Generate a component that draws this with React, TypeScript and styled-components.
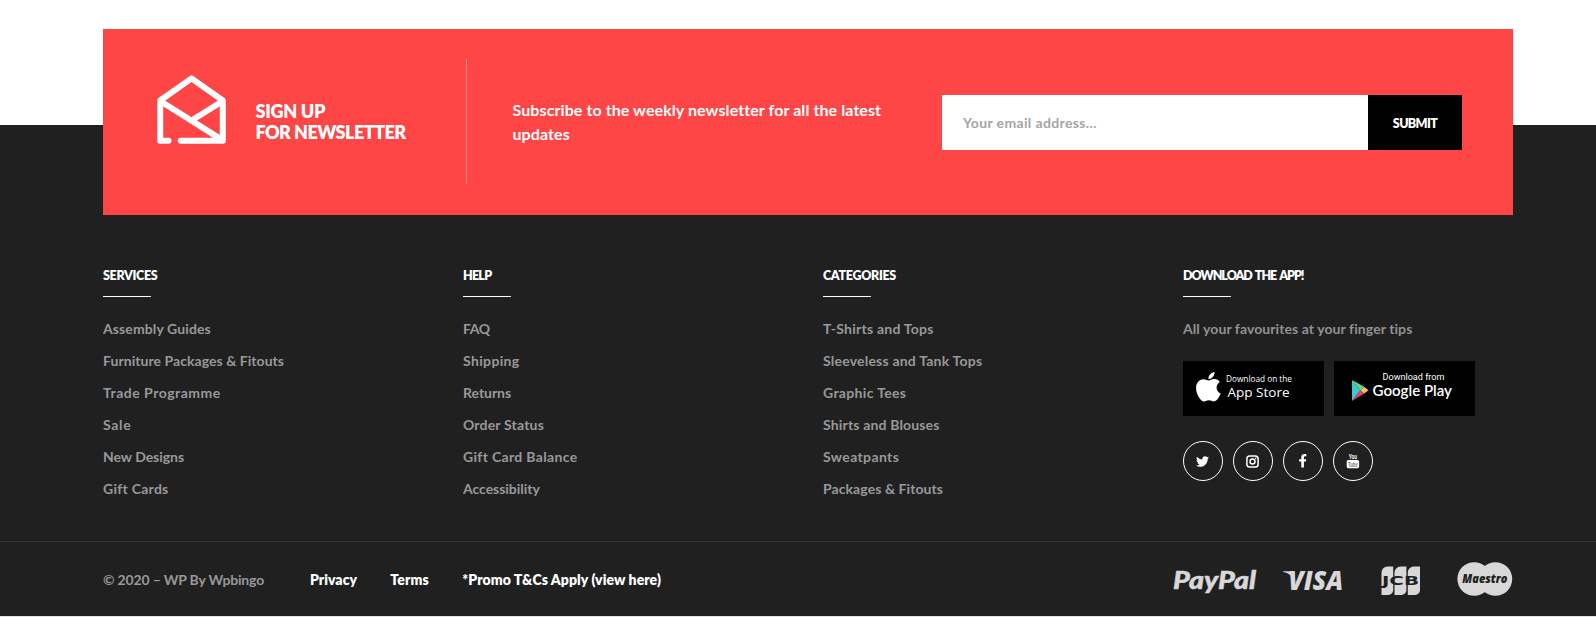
import React from 'react';
import styled, { createGlobalStyle } from 'styled-components';
import { FaTwitter, FaFacebookF, FaApple } from 'react-icons/fa';

const GlobalStyle = createGlobalStyle`
  * { box-sizing: border-box; }
  body { margin: 0; background: #fff; font-family: Lato, 'Open Sans', sans-serif; }
  h2, h3, p, ul { margin: 0; padding: 0; }
  a { color: inherit; text-decoration: none; }
`;

const Page = styled.div`
  width: 1596px;
  height: 617px;
  overflow: hidden;
  background: #e4e2e2;
`;

const NewsletterBand = styled.section`
  padding: 29px 83px 0 103px;
  background: linear-gradient(#fff 125px, #202020 125px);
`;

const Newsletter = styled.div`
  display: flex;
  height: 186px;
  padding: 30px 51px 31px 54px;
  background: #ff4647;
  color: #fff;
`;

const SignUp = styled.div`
  display: flex;
  width: 310px;
  border-right: 1px solid #ff8283;
`;

const Envelope = styled.svg`
  width: 69px;
  height: 69px;
  margin-top: 16px;
`;

const SignUpTitle = styled.h2`
  margin: 42px 0 0 29.5px;
  font-size: 18px;
  font-weight: 800;
  line-height: 21px;
`;

const Pitch = styled.p`
  width: 475px;
  padding: 39px 40px 0 45.5px;
  font-size: 16px;
  font-weight: 700;
  line-height: 24px;
  letter-spacing: 0.09px;
`;

const Form = styled.form`
  display: flex;
  width: 520px;
  height: 55px;
  margin-top: 36px;
`;

const EmailInput = styled.input`
  flex: 1;
  min-width: 0;
  padding: 0 20px 0 21px;
  border: 0;
  outline: 0;
  background: #fff;
  font: 700 14px Lato, sans-serif;
  letter-spacing: 0.36px;
  &::placeholder { color: #a5a5a5; opacity: 1; }
`;

const SubmitButton = styled.button`
  width: 94px;
  padding: 1px 0 0;
  border: 0;
  background: #000;
  color: #fff;
  font: 800 12.5px Lato, sans-serif;
  letter-spacing: -0.65px;
`;

const Columns = styled.section`
  display: grid;
  grid-template-columns: repeat(4, 360px);
  height: 326px;
  padding: 53px 0 0 103px;
  background: #202020;
`;

const ColumnTitle = styled.h3<{ $tracking: number }>`
  height: 28px;
  font-size: 12.5px;
  font-weight: 800;
  line-height: 16px;
  letter-spacing: ${(p) => p.$tracking}px;
  word-spacing: 1.5px;
  color: #fff;
`;

const Rule = styled.div`
  width: 48px;
  height: 1px;
  margin-bottom: 16px;
  background: #fff;
`;

const LinkList = styled.ul`
  list-style: none;
`;

const LinkItem = styled.li<{ $tracking: number }>`
  font-size: 14px;
  font-weight: 700;
  line-height: 32px;
  letter-spacing: ${(p) => p.$tracking - 0.05}px;
  color: #999;
`;

const AppNote = styled.p`
  font-size: 14px;
  font-weight: 700;
  line-height: 32px;
  letter-spacing: 0.08px;
  color: #929292;
`;

const StoreRow = styled.div`
  display: flex;
  gap: 10px;
  margin-top: 16px;
`;

const StoreBadge = styled.a`
  display: block;
  width: 141px;
  height: 55px;
  background: #000;
  color: #fff;
  svg { display: block; }
`;

const SocialRow = styled.div`
  display: flex;
  gap: 10px;
  margin-top: 25px;
`;

const SocialLink = styled.a`
  display: flex;
  align-items: center;
  justify-content: center;
  width: 40px;
  height: 40px;
  padding-right: 1px;
  border: 1px solid #fff;
  border-radius: 50%;
  color: #fff;
`;

const BottomBar = styled.footer`
  display: flex;
  align-items: center;
  height: 75px;
  padding: 0 83px 0 103px;
  border-top: 1px solid #373737;
  background: #202020;
  font-size: 14px;
  line-height: 20px;
`;

const Copyright = styled.span`
  width: 207px;
  padding-top: 1px;
  font-weight: 700;
  letter-spacing: -0.17px;
  color: #999;
`;

const LegalLinks = styled.nav`
  display: flex;
  flex: 1;
  gap: 33.3px;
  padding-top: 1px;
  font-weight: 800;
  color: #fff;
`;

const LegalLink = styled.a<{ $tracking: number }>`
  letter-spacing: ${(p) => p.$tracking}px;
`;

const Payments = styled.svg`
  width: 340px;
  height: 40px;
  flex: none;
`;

type Entry = { label: string; tracking: number };
type Group = { title: string; tracking: number; links: Entry[] };

const groups: Group[] = [
  {
    title: 'SERVICES',
    tracking: -0.33,
    links: [
      { label: 'Assembly Guides', tracking: 0.16 },
      { label: 'Furniture Packages & Fitouts', tracking: 0.1 },
      { label: 'Trade Programme', tracking: 0.56 },
      { label: 'Sale', tracking: 0.75 },
      { label: 'New Designs', tracking: 0.01 },
      { label: 'Gift Cards', tracking: 0.32 },
    ],
  },
  {
    title: 'HELP',
    tracking: -0.75,
    links: [
      { label: 'FAQ', tracking: -0.35 },
      { label: 'Shipping', tracking: 0.4 },
      { label: 'Returns', tracking: 0.02 },
      { label: 'Order Status', tracking: 0.23 },
      { label: 'Gift Card Balance', tracking: 0.38 },
      { label: 'Accessibility', tracking: 0.01 },
    ],
  },
  {
    title: 'CATEGORIES',
    tracking: -0.33,
    links: [
      { label: 'T-Shirts and Tops', tracking: 0.29 },
      { label: 'Sleeveless and Tank Tops', tracking: 0.26 },
      { label: 'Graphic Tees', tracking: 0.39 },
      { label: 'Shirts and Blouses', tracking: 0.21 },
      { label: 'Sweatpants', tracking: 0.42 },
      { label: 'Packages & Fitouts', tracking: 0.13 },
    ],
  },
];

const legal: Entry[] = [
  { label: 'Privacy', tracking: 0.03 },
  { label: 'Terms', tracking: 0.15 },
  { label: '*Promo T&Cs Apply (view here)', tracking: 0.08 },
];

const TitleLine = styled.span<{ $tracking: number }>`
  display: block;
  white-space: nowrap;
  letter-spacing: ${(p) => p.$tracking}px;
`;

function EnvelopeIcon() {
  return (
    <Envelope viewBox="0 0 69 69" fill="none" stroke="#fff" strokeWidth="6" strokeLinecap="round" strokeLinejoin="round">
      <path d="M11.5 65.7H3.2V25.5L34.5 3.4l31.3 22.1v40.2H23.7" />
      <path d="M4 26.5l61 38.4M65 26.5L36.5 44.2" strokeLinecap="butt" />
    </Envelope>
  );
}

function AppStoreBadge() {
  return (
    <svg width="141" height="55" viewBox="0 0 141 55" fill="#fff" fontFamily="'Open Sans', sans-serif">
      <FaApple x="8.6" y="9" size={33.5} color="#fff" />
      <text x="43" y="21" fontSize="8.4" textLength="66" lengthAdjust="spacingAndGlyphs">Download on the</text>
      <text x="44.5" y="36" fontSize="13.4" textLength="62" lengthAdjust="spacingAndGlyphs">App Store</text>
    </svg>
  );
}

function GooglePlayBadge() {
  return (
    <svg width="141" height="55" viewBox="0 0 141 55" fill="#fff">
      <path d="M18 19l8.4 10.5L18 40z" fill="#45c3cf" />
      <path d="M18 19l12.2 6.8-3.8 3.8z" fill="#63d68e" />
      <path d="M30.2 25.8l4.3 3.5-4.3 3.2-3.8-3z" fill="#f6c358" />
      <path d="M18 40l8.4-10.5 3.8 3z" fill="#dd4467" />
      <text x="48.5" y="19.2" fontFamily="Roboto, sans-serif" fontSize="8.6" textLength="62" lengthAdjust="spacingAndGlyphs">Download from</text>
      <text x="38.5" y="35" fontFamily="Lato, sans-serif" fontWeight="600" fontSize="15" textLength="79.5" lengthAdjust="spacingAndGlyphs">Google Play</text>
    </svg>
  );
}

function InstagramIcon() {
  return (
    <svg width="13" height="13" viewBox="0 0 13 13" fill="none" stroke="#fff" strokeWidth="1.5">
      <rect x="0.9" y="0.9" width="11.2" height="11.2" rx="2.8" />
      <circle cx="6.5" cy="6.5" r="2.5" />
      <circle cx="9.8" cy="3.2" r="0.8" fill="#fff" stroke="none" />
    </svg>
  );
}

function YouTubeIcon() {
  return (
    <svg width="20" height="20" viewBox="0 0 20 20" fontFamily="'Liberation Sans', sans-serif" fontWeight="700">
      <text x="5.7" y="8.3" fontSize="7" fill="#fff" textLength="8.4" lengthAdjust="spacingAndGlyphs">You</text>
      <rect x="3.7" y="9" width="12.4" height="8.2" rx="1.6" fill="#fff" />
      <text x="5" y="15.6" fontSize="6.4" fill="#777" textLength="9.8" lengthAdjust="spacingAndGlyphs">Tube</text>
    </svg>
  );
}

function PaymentLogos() {
  return (
    <Payments viewBox="0 0 340 40" fill="#d8d8d8">
      <text x="0" y="29.5" fontFamily="Lato, sans-serif" fontStyle="italic" fontWeight="900" fontSize="24.5" textLength="83" lengthAdjust="spacingAndGlyphs" stroke="#d8d8d8" strokeWidth="0.5">PayPal</text>
      <path d="M110 12.2h9.5l3.2 11.8c-2.3-6-6-9.8-12.7-11.3z" />
      <text x="115.3" y="31" fontFamily="'Open Sans', sans-serif" fontStyle="italic" fontWeight="800" fontSize="26" textLength="55" lengthAdjust="spacingAndGlyphs">VISA</text>
      <path d="M214.5 7.5h5.7v23.5a5 5 0 0 1-5 5h-6.7v-22.5a6 6 0 0 1 6-6z" />
      <path d="M227.7 7.5h5.7v23.5a5 5 0 0 1-5 5h-6.9v-22.5a6 6 0 0 1 6.2-6z" />
      <path d="M240.7 7.5h6.3v23.5a5 5 0 0 1-5 5h-7.2v-22.5a6 6 0 0 1 5.9-6z" />
      <text x="209" y="26.2" fill="#202020" fontFamily="'DejaVu Sans', sans-serif" fontWeight="700" fontSize="12.5" textLength="37" lengthAdjust="spacingAndGlyphs">JCB</text>
      <circle cx="301.2" cy="20" r="16.8" />
      <circle cx="322.4" cy="20" r="16.8" />
      <text x="289.3" y="24" fill="#202020" fontFamily="'Open Sans', sans-serif" fontStyle="italic" fontWeight="800" fontSize="12.5" textLength="45" lengthAdjust="spacingAndGlyphs">Maestro</text>
    </Payments>
  );
}

export default function App() {
  return (
    <Page>
      <GlobalStyle />
      <NewsletterBand>
        <Newsletter>
          <SignUp>
            <EnvelopeIcon />
            <SignUpTitle>
              <TitleLine $tracking={-0.27}>SIGN UP</TitleLine>
              <TitleLine $tracking={-0.56}>FOR NEWSLETTER</TitleLine>
            </SignUpTitle>
          </SignUp>
          <Pitch>Subscribe to the weekly newsletter for all the latest updates</Pitch>
          <Form>
            <EmailInput type="email" placeholder="Your email address..." />
            <SubmitButton type="button">SUBMIT</SubmitButton>
          </Form>
        </Newsletter>
      </NewsletterBand>

      <Columns>
        {groups.map((group) => (
          <div key={group.title}>
            <ColumnTitle $tracking={group.tracking}>{group.title}</ColumnTitle>
            <Rule />
            <LinkList>
              {group.links.map((link) => (
                <LinkItem key={link.label} $tracking={link.tracking}>
                  <a href="#">{link.label}</a>
                </LinkItem>
              ))}
            </LinkList>
          </div>
        ))}
        <div>
          <ColumnTitle $tracking={-1.03}>DOWNLOAD THE APP!</ColumnTitle>
          <Rule />
          <AppNote>All your favourites at your finger tips</AppNote>
          <StoreRow>
            <StoreBadge href="#"><AppStoreBadge /></StoreBadge>
            <StoreBadge href="#"><GooglePlayBadge /></StoreBadge>
          </StoreRow>
          <SocialRow>
            <SocialLink href="#" aria-label="Twitter"><FaTwitter size={13} /></SocialLink>
            <SocialLink href="#" aria-label="Instagram"><InstagramIcon /></SocialLink>
            <SocialLink href="#" aria-label="Facebook"><FaFacebookF size={13.5} /></SocialLink>
            <SocialLink href="#" aria-label="YouTube"><YouTubeIcon /></SocialLink>
          </SocialRow>
        </div>
      </Columns>

      <BottomBar>
        <Copyright>© 2020 – WP By Wpbingo</Copyright>
        <LegalLinks>
          {legal.map((item) => (
            <LegalLink key={item.label} href="#" $tracking={item.tracking}>{item.label}</LegalLink>
          ))}
        </LegalLinks>
        <PaymentLogos />
      </BottomBar>
    </Page>
  );
}
